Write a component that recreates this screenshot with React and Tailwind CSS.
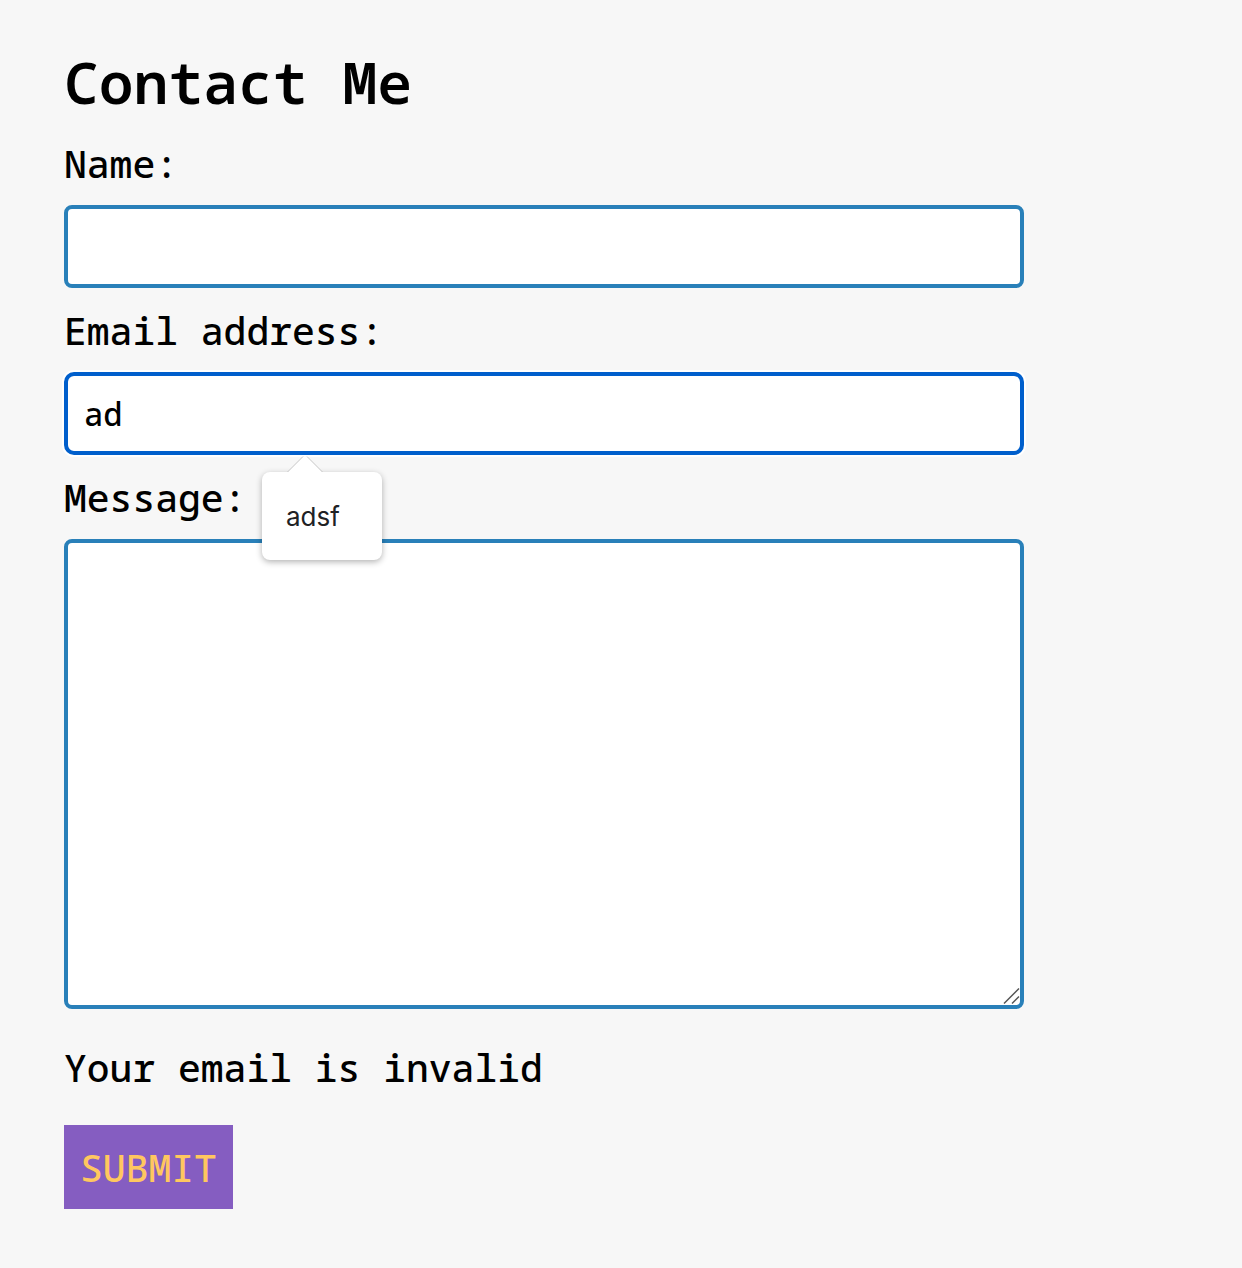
function Field({ id, label, children }) {
  return (
    <div className="mb-4 flex flex-col gap-4">
      <label htmlFor={id} className="text-[38px] leading-[52px]">
        {label}
      </label>
      {children}
    </div>
  );
}

function Suggestion({ text }) {
  return (
    <div className="absolute top-full left-[198px] z-10 pt-[17px]">
      <svg
        className="absolute top-0 left-[25px] z-10"
        width="36"
        height="18"
        viewBox="0 0 36 18"
        aria-hidden="true"
      >
        <path d="M0 18 L16 2 Q18 0 20 2 L36 18 Z" fill="#fff" />
        <path d="M0.5 17 L16 1.5 M20 1.5 L35.5 17" fill="none" stroke="#c8c8c8" />
      </svg>
      <button
        type="button"
        className="flex h-[88px] w-[120px] items-center rounded-lg bg-white px-6 font-['Inter',sans-serif] text-[26px] font-normal text-[#202124] shadow-[0_2px_6px_rgba(0,0,0,0.3)]"
      >
        {text}
      </button>
    </div>
  );
}

export default function App() {
  return (
    <main className="min-h-screen bg-[#f7f7f7] px-16 pt-[42px] pb-[59px] font-['Noto_Sans_Mono',monospace] font-medium text-black">
      <form className="max-w-[960px]" noValidate onSubmit={(e) => e.preventDefault()}>
        <h1 className="mb-4 text-[58px] leading-[79px] font-semibold">Contact Me</h1>

        <Field id="name" label="Name:">
          <input
            id="name"
            type="text"
            className="h-[83px] w-full rounded-lg border-4 border-[#2980b9] bg-white px-4 text-[32px] outline-none"
          />
        </Field>

        <Field id="email" label="Email address:">
          <div className="relative">
            <input
              id="email"
              type="email"
              defaultValue="ad"
              autoComplete="off"
              className="block h-[83px] w-full rounded-[10px] border-4 border-[#005fcc] bg-white px-4 text-[32px] ring-2 ring-white outline-none"
            />
            <Suggestion text="adsf" />
          </div>
        </Field>

        <Field id="message" label="Message:">
          <div className="relative">
            <textarea
              id="message"
              className="block h-[470px] w-full resize-y rounded-lg border-4 border-[#2980b9] bg-white p-4 text-[32px] outline-none [&::-webkit-resizer]:bg-transparent"
            />
            <svg
              className="pointer-events-none absolute right-1 bottom-1"
              width="17"
              height="17"
              viewBox="0 0 17 17"
              fill="none"
              stroke="#555"
              strokeWidth="1.5"
              aria-hidden="true"
            >
              <path d="M1 15.5 L16 0.5 M9 15.5 L16 8.5" />
            </svg>
          </div>
        </Field>

        <p role="alert" className="mt-8 mb-8 text-[38px] leading-[52px]">
          Your email is invalid
        </p>
        <button type="submit" className="bg-[#855dc1] p-4 text-[38px] leading-[52px] text-[#ffc75f]">
          SUBMIT
        </button>
      </form>
    </main>
  );
}
